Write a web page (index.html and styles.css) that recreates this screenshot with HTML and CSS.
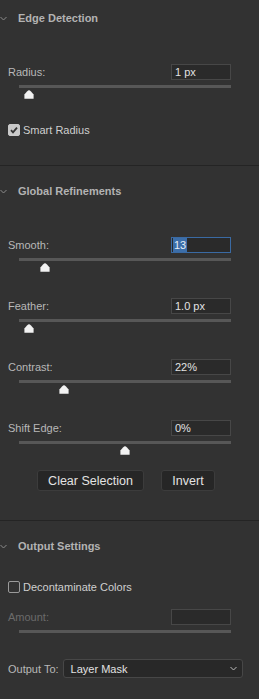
FILE: index.html
```html
<!DOCTYPE html>
<html>
<head>
<meta charset="utf-8">
<link rel="stylesheet" href="styles.css">
</head>
<body>
<div class="panel">
  <section class="sec first">
    <h2 class="head"><svg class="chev" width="7" height="5" viewBox="0 0 7 5"><polyline points="0.5,1 3.5,4 6.5,1" fill="none" stroke="#8a8a8a" stroke-width="1"/></svg>Edge Detection</h2>
    <div class="field">
      <div class="row"><span class="lbl">Radius:</span><span class="inp">1 px</span></div>
      <div class="track"><svg class="thumb" style="left:5px" width="10" height="9" viewBox="0 0 10 9"><path d="M5 0.3 Q5.8 0.3 7 1.6 L9.6 4.6 L9.6 8.8 L0.4 8.8 L0.4 4.6 L3 1.6 Q4.2 0.3 5 0.3Z" fill="#f2f2f2"/></svg></div>
    </div>
    <div class="check"><span class="box on"><svg width="12" height="12" viewBox="0 0 12 12"><polyline points="3,6.2 5,8.4 9,3.6" fill="none" stroke="#333" stroke-width="1.8"/></svg></span><span class="ctext">Smart Radius</span></div>
  </section>

  <section class="sec">
    <h2 class="head"><svg class="chev" width="7" height="5" viewBox="0 0 7 5"><polyline points="0.5,1 3.5,4 6.5,1" fill="none" stroke="#8a8a8a" stroke-width="1"/></svg>Global Refinements</h2>
    <div class="field">
      <div class="row"><span class="lbl">Smooth:</span><span class="inp focus"><span class="sel">13</span></span></div>
      <div class="track"><svg class="thumb" style="left:21px" width="10" height="9" viewBox="0 0 10 9"><path d="M5 0.3 Q5.8 0.3 7 1.6 L9.6 4.6 L9.6 8.8 L0.4 8.8 L0.4 4.6 L3 1.6 Q4.2 0.3 5 0.3Z" fill="#f2f2f2"/></svg></div>
    </div>
    <div class="field next">
      <div class="row"><span class="lbl">Feather:</span><span class="inp">1.0 px</span></div>
      <div class="track"><svg class="thumb" style="left:5px" width="10" height="9" viewBox="0 0 10 9"><path d="M5 0.3 Q5.8 0.3 7 1.6 L9.6 4.6 L9.6 8.8 L0.4 8.8 L0.4 4.6 L3 1.6 Q4.2 0.3 5 0.3Z" fill="#f2f2f2"/></svg></div>
    </div>
    <div class="field next">
      <div class="row"><span class="lbl">Contrast:</span><span class="inp">22%</span></div>
      <div class="track"><svg class="thumb" style="left:40px" width="10" height="9" viewBox="0 0 10 9"><path d="M5 0.3 Q5.8 0.3 7 1.6 L9.6 4.6 L9.6 8.8 L0.4 8.8 L0.4 4.6 L3 1.6 Q4.2 0.3 5 0.3Z" fill="#f2f2f2"/></svg></div>
    </div>
    <div class="field next">
      <div class="row"><span class="lbl">Shift Edge:</span><span class="inp">0%</span></div>
      <div class="track"><svg class="thumb" style="left:101px" width="10" height="9" viewBox="0 0 10 9"><path d="M5 0.3 Q5.8 0.3 7 1.6 L9.6 4.6 L9.6 8.8 L0.4 8.8 L0.4 4.6 L3 1.6 Q4.2 0.3 5 0.3Z" fill="#f2f2f2"/></svg></div>
    </div>
    <div class="buttons">
      <button class="btn wide">Clear Selection</button>
      <button class="btn narrow">Invert</button>
    </div>
  </section>

  <section class="sec last">
    <h2 class="head"><svg class="chev" width="7" height="5" viewBox="0 0 7 5"><polyline points="0.5,1 3.5,4 6.5,1" fill="none" stroke="#8a8a8a" stroke-width="1"/></svg>Output Settings</h2>
    <div class="check out"><span class="box"></span><span class="ctext">Decontaminate Colors</span></div>
    <div class="field amount">
      <div class="row"><span class="lbl dis">Amount:</span><span class="inp"></span></div>
      <div class="track"></div>
    </div>
    <div class="output">
      <span class="lbl">Output To:</span>
      <div class="select"><span>Layer Mask</span><svg width="7" height="5" viewBox="0 0 7 5"><polyline points="0.5,1 3.5,4 6.5,1" fill="none" stroke="#bbb" stroke-width="1"/></svg></div>
    </div>
  </section>
</div>
</body>
</html>
```

FILE: styles.css
```css
* { box-sizing: border-box; }
html, body {
  margin: 0;
  padding: 0;
  background: #323232;
}
body {
  width: 259px;
  height: 699px;
  overflow: hidden;
  font-family: "Liberation Sans", Arial, sans-serif;
  font-size: 11px;
  color: #bdbdbd;
}
.panel { width: 259px; }
.sec {
  padding-top: 18px;
  padding-bottom: 29px;
  border-bottom: 1px solid #242424;
}
.sec.first { padding-top: 11px; }
.sec.last { border-bottom: none; padding-bottom: 0; }
.head {
  margin: 0;
  height: 14px;
  line-height: 14px;
  font-size: 11px;
  font-weight: bold;
  color: #b3b3b3;
  display: flex;
  align-items: center;
  padding-left: 0;
}
.chev { margin: 0 11px 0 0; flex: none; }
.field { margin-top: 39px; }
.field.next { margin-top: 37px; }
.row {
  height: 16px;
  display: flex;
  align-items: center;
  justify-content: space-between;
  padding: 0 28px 0 8px;
}
.lbl { color: #b8b8b8; }
.lbl.dis { color: #6b6b6b; }
.inp {
  width: 60px;
  height: 16px;
  background: #2a2a2a;
  border: 1px solid #474747;
  color: #e2e2e2;
  line-height: 14px;
  padding-left: 3px;
  font-size: 11px;
}
.inp.focus { border-color: #3a6aa3; padding-left: 1px; }
.sel {
  display: inline-block;
  background: #3c6ea9;
  color: #e8eef5;
  height: 14px;
  padding: 0 1px;
}
.track {
  position: relative;
  margin: 5px 28px 0 19px;
  height: 3px;
  background: #575757;
}
.thumb {
  position: absolute;
  top: 5px;
  display: block;
}
.check {
  margin-top: 36px;
  height: 12px;
  display: flex;
  align-items: center;
  padding-left: 8px;
  color: #cfcfcf;
}
.check.out { margin-top: 28px; }
.box {
  width: 12px;
  height: 12px;
  border-radius: 2px;
  border: 1px solid #9a9a9a;
  margin-right: 3px;
  flex: none;
}
.box svg { display: block; margin: -1px; }
.box.on { background: #c9c9c9; border-color: #c9c9c9; }
.ctext { line-height: 12px; }
.buttons {
  margin-top: 26px;
  display: flex;
  padding-left: 37px;
  gap: 17px;
}
.btn {
  height: 21px;
  background: #262626;
  border: 1px solid #3c3c3c;
  border-radius: 3px;
  color: #e3e3e3;
  font-family: "Liberation Sans", Arial, sans-serif;
  font-size: 12.5px;
  padding: 0;
}
.btn.wide { width: 107px; }
.btn.narrow { width: 54px; }
.field.amount { margin-top: 16px; }
.output {
  margin-top: 26px;
  display: flex;
  align-items: center;
  padding-left: 8px;
}
.select {
  margin-left: 4px;
  width: 180px;
  height: 19px;
  background: #282828;
  border: 1px solid #474747;
  border-radius: 3px;
  display: flex;
  align-items: center;
  justify-content: space-between;
  padding: 0 5px 0 7px;
  color: #e2e2e2;
}
```
